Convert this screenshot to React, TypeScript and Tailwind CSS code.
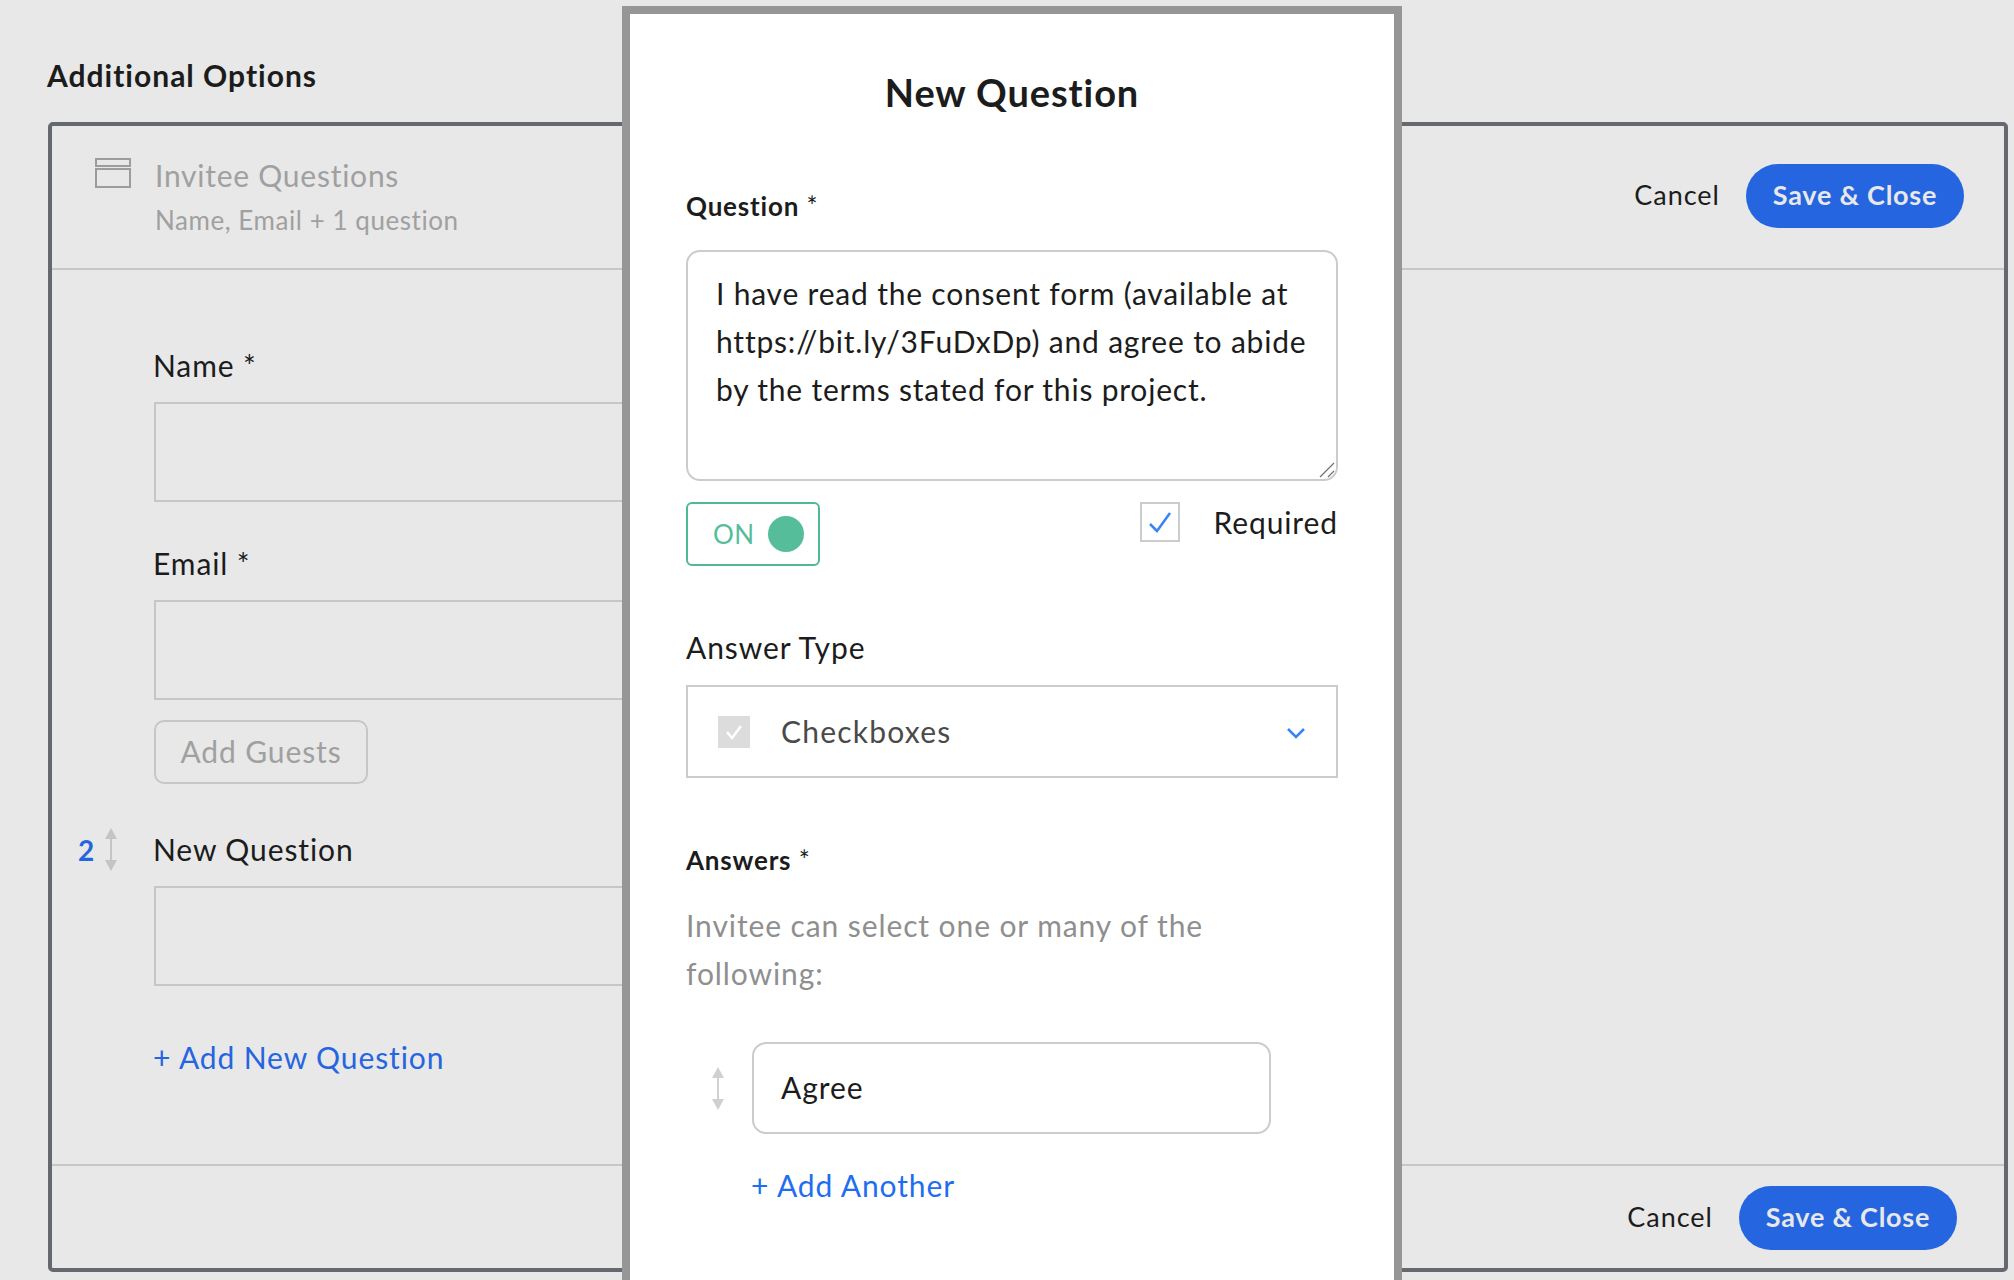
const font = { fontFamily: '"Lato", "Open Sans", sans-serif' };

const DragArrow = ({ color = "#c4c4c4", className = "" }: { color?: string; className?: string }) => (
  <svg width="14" height="43" viewBox="0 0 14 43" className={className}>
    <path d="M7 0 L13 11 H1 Z" fill={color} />
    <rect x="6" y="10" width="2" height="24" fill={color} />
    <path d="M7 43 L13 32 H1 Z" fill={color} />
  </svg>
);

const FormIcon = () => (
  <svg width="36" height="30" viewBox="0 0 36 30" fill="none" stroke="#9c9c9c" strokeWidth="2">
    <rect x="1" y="1" width="34" height="7" />
    <rect x="1" y="11" width="34" height="18" />
  </svg>
);

const Actions = () => (
  <div className="flex items-center gap-[26px]">
    <span className="pb-[2px] text-[27px] tracking-[1px] text-[#1c1c1c]">Cancel</span>
    <button className="h-[64px] w-[218px] rounded-full bg-[#2565df] pb-[2px] text-[27px] font-bold tracking-[0.75px] text-[#e8e8e8]">
      Save &amp; Close
    </button>
  </div>
);

const FieldLabel = ({ children, className = "" }: { children: React.ReactNode; className?: string }) => (
  <div className={`-ml-[1px] h-[40px] text-[30px] leading-[38px] tracking-[0.9px] text-[#1c1c1c] ${className}`}>{children}</div>
);

const BlankInput = ({ className = "" }: { className?: string }) => (
  <div className={`h-[100px] w-[900px] border-2 border-[#c6c6c6] ${className}`} />
);

export default function App() {
  return (
    <div style={font} className="relative h-[1280px] w-[2014px] overflow-hidden bg-[#e8e8e8]">
      <div className="pl-[48px]">
        <h2 className="-ml-[1px] h-[122px] pt-[56px] text-[30px] leading-[38px] font-bold tracking-[1px] text-[#1c1c1c]">Additional Options</h2>

        {/* background panel */}
        <div className="flex h-[1150px] w-[1960px] flex-col rounded-[5px] border-4 border-[#666870]">
          <div className="flex h-[144px] shrink-0 items-center justify-between border-b-2 border-[#c6c6c6] pr-[40px] pb-[2px] pl-[43px]">
            <div className="flex gap-[24px] self-start pt-[32px]">
              <FormIcon />
              <div className="-mt-[1px]">
                <div className="h-[36px] text-[30px] leading-[36px] tracking-[0.75px] text-[#a0a0a0]">Invitee Questions</div>
                <div className="mt-[9px] text-[26px] leading-[36px] tracking-[0.55px] text-[#a0a0a0]">Name, Email + 1 question</div>
              </div>
            </div>
            <Actions />
          </div>

          <div className="flex-1 pt-[76px] pl-[102px]">
            <FieldLabel>Name *</FieldLabel>
            <BlankInput className="mt-[16px]" />
            <FieldLabel className="mt-[42px]">Email *</FieldLabel>
            <BlankInput className="mt-[16px]" />
            <div className="mt-[20px] flex h-[64px] w-[214px] items-center justify-center rounded-[10px] border-2 border-[#c6c6c6] pb-[2px] text-[30px] tracking-[0.9px] text-[#a0a0a0]">
              Add Guests
            </div>
            <div className="relative mt-[46px]">
              <div className="absolute top-0 -left-[76px] flex h-[40px] items-center gap-[11px]">
                <span className="w-[15px] text-[28px] font-bold text-[#2565df]">2</span>
                <DragArrow className="-mt-[1px]" />
              </div>
              <FieldLabel>New Question</FieldLabel>
            </div>
            <BlankInput className="mt-[16px]" />
            <FieldLabel className="mt-[52px] text-[#2565df]">+ Add New Question</FieldLabel>
          </div>

          <div className="flex h-[104px] shrink-0 items-center justify-end border-t-2 border-[#c6c6c6] pt-[2px] pr-[47px]">
            <Actions />
          </div>
        </div>
      </div>

      {/* modal */}
      <div className="absolute top-[6px] left-[622px] h-[1400px] w-[780px] border-8 border-[#969696] bg-white px-[56px] pt-[54px]">
        <h1 className="text-center text-[38px] leading-[48px] font-bold tracking-[0.9px] text-[#1c1c1c]">New Question</h1>

        <div className="mt-[74px] h-[32px] text-[26px] leading-[32px] tracking-[0.8px] text-[#1c1c1c]">
          <span className="font-bold">Question</span> *
        </div>
        <div className="relative mt-[28px] w-[652px]">
          <textarea
            readOnly
            className="block h-[231px] w-[652px] resize-none rounded-[14px] border-2 border-[#cccccc] pt-[17px] pr-[20px] pl-[28px] text-[30px] leading-[48px] tracking-[0.8px] text-[#1c1c1c] outline-none"
            value="I have read the consent form (available at https://bit.ly/3FuDxDp) and agree to abide by the terms stated for this project."
          />
          <svg className="absolute right-[3px] bottom-[3px]" width="16" height="16" viewBox="0 0 16 16" fill="none" stroke="#707070" strokeWidth="1.2">
            <path d="M1 15 L15 1 M9 15 L15 9" />
          </svg>
        </div>

        <div className="mt-[21px] flex w-[652px] items-start justify-between">
          <div className="flex h-[64px] w-[134px] items-center rounded-[6px] border-2 border-[#4fb899] pl-[25px]">
            <span className="text-[26px] tracking-[0.5px] text-[#56bd9a]">ON</span>
            <span className="mr-[14px] ml-auto h-[36px] w-[36px] rounded-full bg-[#56bd9a]" />
          </div>
          <div className="flex items-start gap-[33px]">
            <div className="flex h-[40px] w-[40px] items-center justify-center border-2 border-[#cccccc]">
              <svg width="24" height="24" viewBox="0 0 24 24" fill="none" stroke="#3b82f6" strokeWidth="2.5">
                <path d="M2 14 L9 21 L22 3" />
              </svg>
            </div>
            <span className="text-[30px] leading-[40px] tracking-[0.9px] text-[#1c1c1c]">Required</span>
          </div>
        </div>

        <FieldLabel className="mt-[62px] ml-0">Answer Type</FieldLabel>
        <div className="mt-[17px] flex h-[93px] w-[652px] items-center border-2 border-[#cccccc] px-[30px]">
          <div className="flex h-[32px] w-[32px] items-center justify-center bg-[#dcdcdc]">
            <svg width="20" height="20" viewBox="0 0 20 20" fill="none" stroke="#ffffff" strokeWidth="2.5">
              <path d="M3 10 L8 16 L17 4" />
            </svg>
          </div>
          <span className="ml-[31px] text-[30px] tracking-[1.2px] text-[#4a4a4a]">Checkboxes</span>
          <svg className="mt-[3px] ml-auto" width="20" height="12" viewBox="0 0 20 12" fill="none" stroke="#3b82f6" strokeWidth="2.5">
            <path d="M2 2 L10 10 L18 2" />
          </svg>
        </div>

        <div className="mt-[66px] h-[32px] text-[26px] leading-[32px] tracking-[0.8px] text-[#1c1c1c]">
          <span className="font-bold">Answers</span> *
        </div>
        <p className="mt-[25px] max-w-[560px] text-[30px] leading-[48px] tracking-[0.9px] text-[#8f8f8f]">
          Invitee can select one or many of the following:
        </p>

        <div className="mt-[45px] flex items-center">
          <div className="flex w-[66px] pl-[25px]">
            <DragArrow color="#d0d0d0" />
          </div>
          <div className="flex h-[92px] w-[519px] items-center rounded-[14px] border-2 border-[#cccccc] pb-[2px] pl-[27px] text-[30px] tracking-[0.9px] text-[#1c1c1c]">
            Agree
          </div>
        </div>
        <div className="mt-[31px] ml-[65px] h-[40px] text-[30px] leading-[40px] tracking-[0.9px] text-[#1f6ef0]">+ Add Another</div>
      </div>
    </div>
  );
}
